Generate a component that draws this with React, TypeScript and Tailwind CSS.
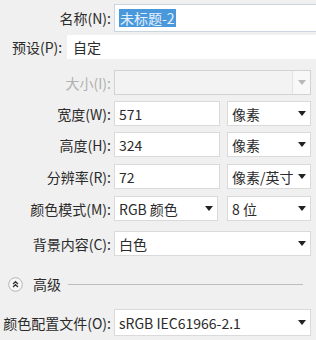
const FONT = "font-['Noto_Sans_CJK_SC','Noto_Sans',sans-serif]";

function Arrow({ muted = false }: { muted?: boolean }) {
  return (
    <svg width="8" height="5" viewBox="0 0 8 5" className="shrink-0">
      <path d="M0 0h8L4 5z" fill={muted ? "#b8b8b8" : "#222"} />
    </svg>
  );
}

function Label({ children, muted = false }: { children: React.ReactNode; muted?: boolean }) {
  return (
    <span className={`w-[111px] shrink-0 text-right whitespace-nowrap ${muted ? "text-[#b0b0b0]" : "text-[#2b2b2b]"}`}>
      {children}
    </span>
  );
}

function Input({ value, className = "" }: { value: string; className?: string }) {
  return (
    <div className={`flex h-full items-center border border-[#dadada] bg-white pl-[4px] ${className}`}>
      {value}
    </div>
  );
}

function Select({ value, className = "" }: { value: string; className?: string }) {
  return (
    <div className={`flex h-full items-center justify-between border border-[#dadada] bg-white pl-[4px] pr-[4px] ${className}`}>
      <span className="whitespace-nowrap">{value}</span>
      <Arrow />
    </div>
  );
}

export default function App() {
  return (
    <div className={`relative h-[340px] w-[316px] overflow-hidden bg-[#f0f0f0] text-[14px] leading-none text-[#2b2b2b] ${FONT}`}>
      {/* Name */}
      <div className="mt-[4px] flex h-[28px] items-center gap-[3px]">
        <Label>名称(N):</Label>
        <div className="flex h-full w-[220px] shrink-0 items-center border border-[#c9d6e2] bg-white pl-[4px]">
          <span className="bg-[#4a98dc] px-[1px] py-[2px] text-[#e6f1fc]">未标题-2</span>
        </div>
      </div>

      {/* Preset */}
      <div className="mt-[3px] flex h-[24px] items-center">
        <span className="ml-[12px] w-[54px] shrink-0 whitespace-nowrap">预设(P):</span>
        <div className="ml-[1px] flex h-full w-[260px] shrink-0 items-center justify-between bg-white pl-[6px]">
          <span>自定</span>
          <span className="mr-[-3px]"><Arrow /></span>
        </div>
      </div>

      {/* Size (disabled) */}
      <div className="mt-[11px] flex h-[25px] items-center gap-[3px]">
        <Label muted>大小(I):</Label>
        <div className="flex h-full w-[197px] shrink-0 items-stretch border border-[#d2d2d2] bg-[#f3f3f3]">
          <div className="flex-1" />
          <div className="flex w-[18px] items-center justify-center border-l border-[#e2e2e2] bg-[#f8f8f8]">
            <Arrow muted />
          </div>
        </div>
      </div>

      {/* Width */}
      <div className="mt-[6px] flex h-[25px] items-center gap-[3px]">
        <Label>宽度(W):</Label>
        <Input value="571" className="w-[106px]" />
        <Select value="像素" className="ml-[4px] w-[84px]" />
      </div>

      {/* Height */}
      <div className="mt-[6px] flex h-[25px] items-center gap-[3px]">
        <Label>高度(H):</Label>
        <Input value="324" className="w-[106px]" />
        <Select value="像素" className="ml-[4px] w-[84px]" />
      </div>

      {/* Resolution */}
      <div className="mt-[7px] flex h-[25px] items-center gap-[3px]">
        <Label>分辨率(R):</Label>
        <Input value="72" className="w-[106px]" />
        <Select value="像素/英寸" className="ml-[4px] w-[84px]" />
      </div>

      {/* Color mode */}
      <div className="mt-[7px] flex h-[25px] items-center gap-[3px]">
        <Label>颜色模式(M):</Label>
        <Select value="RGB 颜色" className="w-[104px]" />
        <Select value="8 位" className="ml-[6px] w-[84px]" />
      </div>

      {/* Background */}
      <div className="mt-[10px] flex h-[25px] items-center gap-[3px]">
        <Label>背景内容(C):</Label>
        <Select value="白色" className="w-[197px]" />
      </div>

      {/* Advanced */}
      <div className="mt-[20px] flex h-[16px] items-center">
        <svg width="15" height="15" viewBox="0 0 15 15" className="ml-[8px] shrink-0">
          <circle cx="7.5" cy="7.5" r="6.8" fill="#f7f7f7" stroke="#b5b5b5" strokeWidth="1" />
          <path d="M5 7L7.5 4.7L10 7M5 10L7.5 7.7L10 10" fill="none" stroke="#333" strokeWidth="1.3" />
        </svg>
        <span className="ml-[10px] shrink-0">高级</span>
        <div className="ml-[7px] mr-[13px] h-px flex-1 bg-[#bdbdbd]" />
      </div>

      {/* Color profile */}
      <div className="mt-[17px] flex h-[27px] items-center gap-[3px]">
        <Label>颜色配置文件(O):</Label>
        <Select value="sRGB IEC61966-2.1" className="w-[197px]" />
      </div>
    </div>
  );
}
